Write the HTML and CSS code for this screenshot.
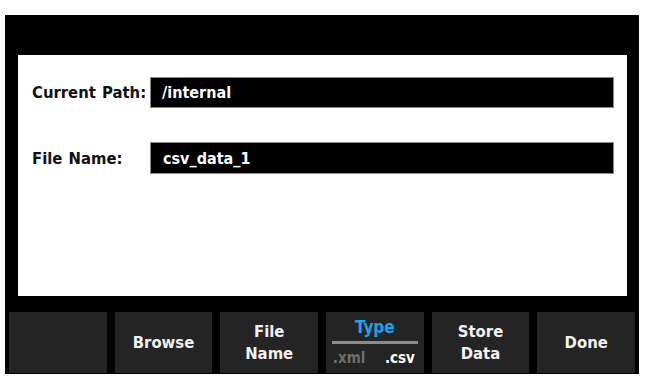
FILE: index.html
```html
<!DOCTYPE html>
<html>
<head>
<meta charset="utf-8">
<link rel="stylesheet" href="styles.css">
</head>
<body>
<div class="screen">
  <div class="panel">
    <div class="row row-path">
      <span class="label">Current Path:</span>
      <div class="field">/internal</div>
    </div>
    <div class="row row-name">
      <span class="label">File Name:</span>
      <div class="field">csv_data_1</div>
    </div>
  </div>
  <div class="softkeys">
    <div class="key"></div>
    <div class="key"><span>Browse</span></div>
    <div class="key"><span>File<br>Name</span></div>
    <div class="key key-type">
      <span class="type-title">Type</span>
      <span class="type-line"></span>
      <span class="type-opts"><span class="opt-off">.xml</span><span class="opt-on">.csv</span></span>
    </div>
    <div class="key"><span>Store<br>Data</span></div>
    <div class="key"><span>Done</span></div>
  </div>
</div>
</body>
</html>
```
FILE: styles.css
```css
html, body {
  margin: 0;
  padding: 0;
  background: #ffffff;
}
body {
  font-family: "DejaVu Sans Condensed", "DejaVu Sans", "Liberation Sans", sans-serif;
  font-stretch: semi-condensed;
  font-weight: bold;
}
.screen {
  margin: 15px 0 0 5px;
  width: 634px;
  height: 359px;
  background: #000000;
  box-sizing: border-box;
  padding-top: 40px;
  display: flex;
  flex-direction: column;
}
.panel {
  margin: 0 12px 0 13px;
  height: 241px;
  background: #ffffff;
  box-sizing: border-box;
  padding: 22px 13px 0 14px;
  display: flex;
  flex-direction: column;
  gap: 34px;
}
.row {
  display: flex;
  align-items: center;
  height: 31px;
}
.row-name {
  height: 32px;
}
.label {
  width: 118px;
  font-size: 16.5px;
  color: #111;
  word-spacing: 1px;
}
.field {
  flex: 1;
  align-self: stretch;
  background: #000;
  border: 1px solid #8a8a8a;
  color: #fff;
  font-size: 16px;
  display: flex;
  align-items: center;
  padding-left: 12px;
}
.row-path .field {
  padding-left: 11px;
}
.softkeys {
  margin: 16px 4px 0 4px;
  height: 61px;
  display: flex;
  gap: 8px;
}
.key {
  flex: 1;
  background: #242424;
  color: #f2f2f2;
  font-size: 16.5px;
  line-height: 22px;
  display: flex;
  align-items: center;
  justify-content: center;
  text-align: center;
}
.key-type {
  flex-direction: column;
  justify-content: flex-start;
  padding-top: 5px;
  box-sizing: border-box;
}
.type-title {
  color: #1fa3e6;
  font-size: 17px;
  line-height: 20px;
}
.type-line {
  display: block;
  width: 86px;
  height: 3px;
  background: #8c8c8c;
  margin-top: 4px;
}
.type-opts {
  display: flex;
  width: 96px;
  box-sizing: border-box;
  padding: 0 8px 0 6px;
  justify-content: space-between;
  font-size: 15px;
  line-height: 20px;
  margin-top: 4px;
}
.opt-off {
  color: #6e6e6e;
}
.opt-on {
  color: #ffffff;
}
```
